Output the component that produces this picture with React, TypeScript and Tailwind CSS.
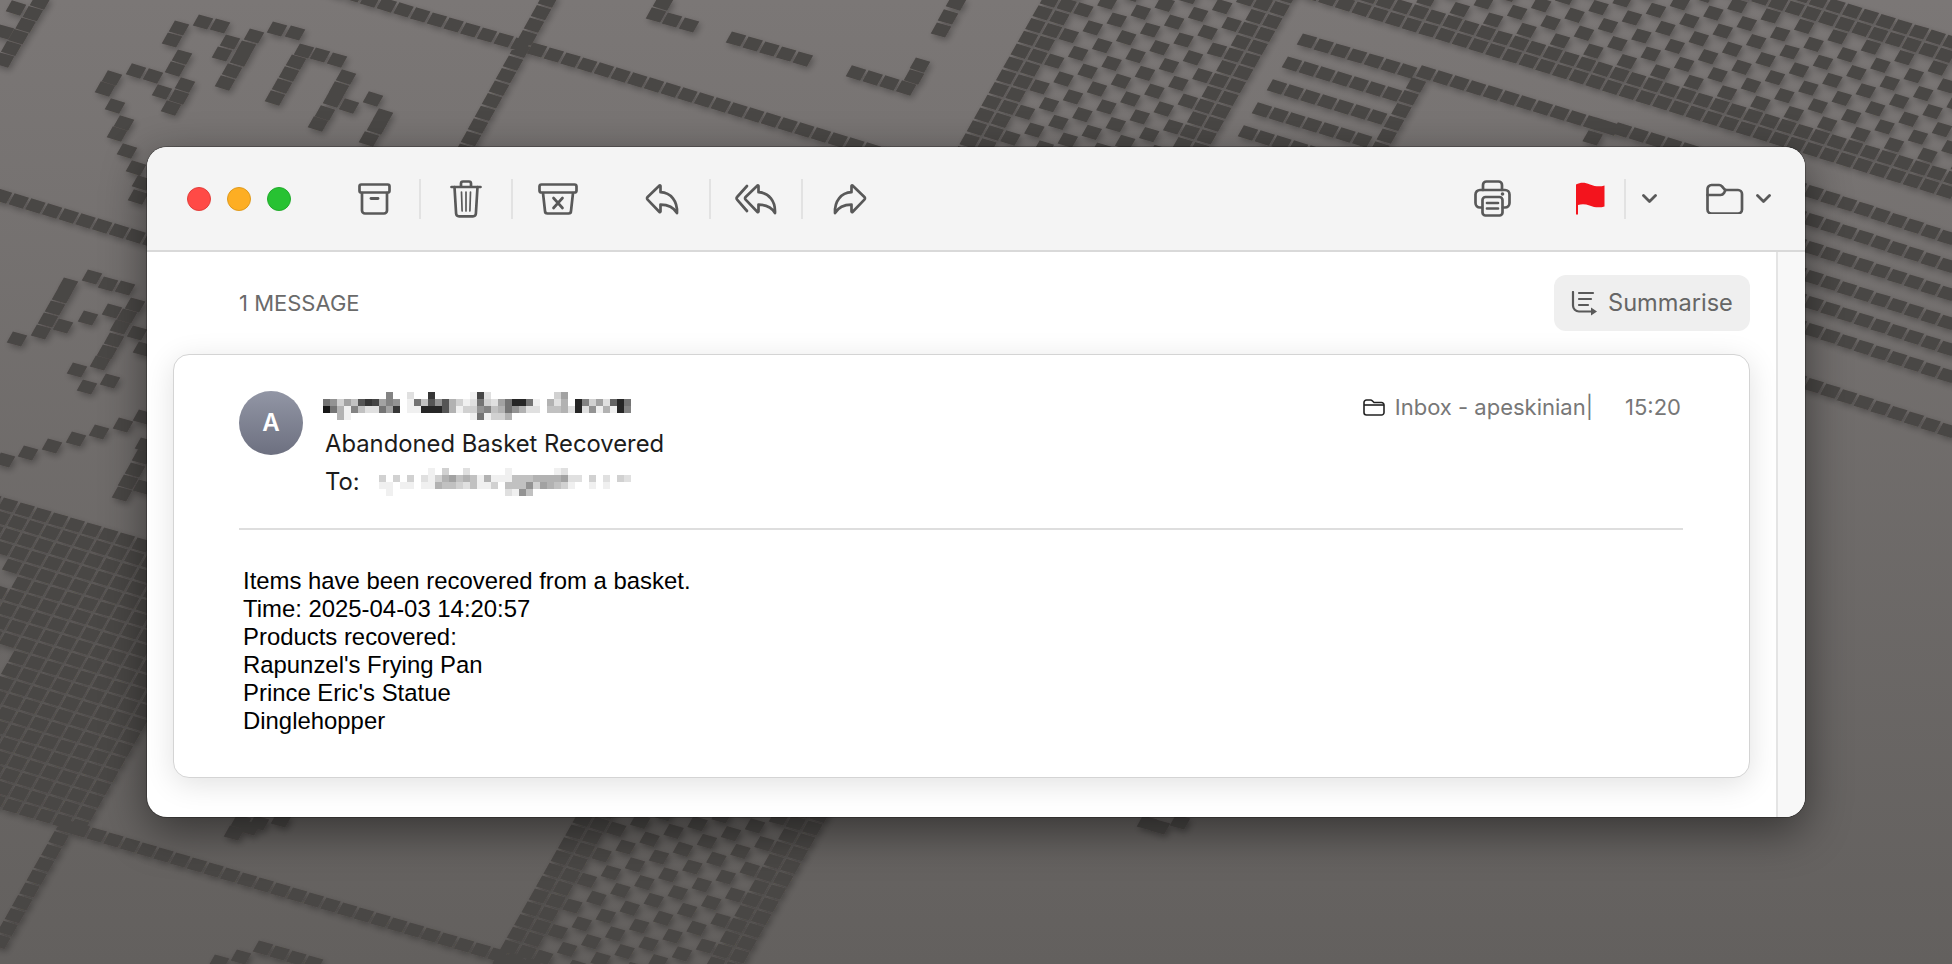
const U = [16.7, 5];
const UR = [16.7, 5.6];
const V = [-7.3, 12.8];

type Pt = [number, number];

function run(x: number, y: number, n: number, d: number[] = U): Pt[] {
  return Array.from({ length: n }, (_, k) => [x + d[0] * k, y + d[1] * k] as Pt);
}

// solid edges with a checker between them, used for the wide bands
function band(x: number, y: number, is: number[], js: number[], solid: (i: number, j: number) => boolean, d: number[]) {
  const out: Pt[] = [];
  for (let i = is[0]; i <= is[1]; i++) {
    for (let j = js[0]; j <= js[1]; j++) {
      if (!solid(i, j) && (i + j) % 2 !== 0) continue;
      const cx = x + d[0] * i + V[0] * j;
      const cy = y + d[1] * i + V[1] * j;
      if (cy < -20 || cy > 985 || cx < -20 || cx > 1975) continue;
      out.push([cx, cy]);
    }
  }
  return out;
}

function leftBlock() {
  const out: Pt[] = [];
  for (let i = -1; i <= 13; i++) {
    for (let j = 0; j <= 20; j++) {
      const cx = 8 + U[0] * i + V[0] * j;
      const cy = 505 + U[1] * i + V[1] * j;
      if (cx < -20) continue;
      if (cx < 8 && ((cy > 553 && cy < 582) || (cy > 648 && cy < 682))) continue;
      out.push([cx, cy]);
    }
  }
  return out;
}

const CELLS: Pt[] = [
  // top left glyphs
  [179, 28], [172, 40], [203, 22], [220, 26], [254, 36], [230, 42], [246, 48], [222, 54], [240, 59], [232, 71], [225, 83],
  [277, 29], [295, 33], [304, 51], [320, 55], [337, 60], [296, 62], [289, 74], [282, 86], [275, 98],
  [346, 77], [339, 89], [333, 100], [349, 106], [373, 99], [325, 113], [318, 124], [383, 116], [377, 127], [369, 139],
  [182, 57], [175, 69], [185, 85], [179, 97], [162, 92], [171, 108], [136, 71], [153, 76], [112, 78], [105, 89],
  [115, 106], [124, 123], [117, 134], [127, 151], [136, 168], [142, 183], [138, 197],
  [16, 8], [4, 32], [663, 3], [656, 15], [672, 20], [689, 25],
  ...run(40, 2, 6, [-7.2, 11.6]),
  // long line and its crossing column
  ...run(320, -15, 36),
  ...run(548, 0, 13, [-7, 12.6]),
  ...run(2, 196, 10),
  // left glyphs
  [68, 285], [62, 296], [55, 308], [48, 320], [41, 332], [63, 326], [92, 277], [108, 284], [125, 288], [135, 305],
  [112, 311], [127, 316], [120, 327], [137, 333], [114, 340], [107, 352], [100, 363], [88, 318], [77, 370], [87, 387],
  [110, 381], [143, 349], [17, 339], [123, 425], [99, 432], [76, 439], [52, 446], [28, 453], [5, 460], [143, 417],
  [122, 494], [128, 482], [135, 470], [142, 457], [145, 445], [143, 487],
  ...leftBlock(),
  ...run(80, 830, 30),
  ...run(66, 826, 10, V),
  // big vertical checker band
  ...band(1050, 0, [0, 12], [-15, 85], (i) => i < 2 || i > 10, U),
  // top right checker band
  ...band(1345, 4, [-4, 40], [-10, 0], (_, j) => j > -2 || j < -8, [16.7, 5.2]),
  // seven cell rows
  ...run(1307, 41, 7), ...run(1292, 64, 7), ...run(1277, 87, 7), ...run(1262, 110, 7), ...run(1248, 133, 7),
  // top small bits
  [956, 3], [948, 17], [941, 30], ...run(736, 39, 5), ...run(856, 73, 4), [920, 65], [914, 77],
  // L shaped line
  ...run(1426, 73, 12), ...run(1416, 85, 6, V), ...run(1600, 125, 2, V), ...run(1622, 130, 5),
  // right rows
  ...[187, 215, 243, 272, 298, 325, 380].flatMap((y) => run(1797, y, 11, UR)),
  // under the window
  [259, 823], [241, 822], [281, 820], [234, 833], [250, 828], [1147, 823], [1160, 827], [1180, 822],
  ...run(263, 948, 4), [241, 957], [219, 962],
];

function Wallpaper() {
  const d = CELLS.map(([x, y]) => {
    const ux = 7.2;
    const uy = 2.15;
    const vx = -3.1;
    const vy = 5.5;
    const p = [
      [x - ux - vx, y - uy - vy],
      [x + ux - vx, y + uy - vy],
      [x + ux + vx, y + uy + vy],
      [x - ux + vx, y - uy + vy],
    ];
    return `M${p.map((q) => q.map((n) => n.toFixed(1)).join(" ")).join("L")}Z`;
  }).join("");

  return (
    <svg className="absolute inset-0" width="1952" height="964">
      <defs>
        <filter id="cellShadow" x="-5%" y="-5%" width="110%" height="110%">
          <feDropShadow dx="2" dy="3" stdDeviation="3" floodColor="#000" floodOpacity="0.28" />
        </filter>
      </defs>
      <path d={d} fill="#4a4644" filter="url(#cellShadow)" />
    </svg>
  );
}

const SENDER = [
  "000000000800200d000001c2000000000360000000000",
  "97364bdc6870194b7b531293269ee9105250e8362ae9",
  "f951842296d011eeeb513378459752204452e27151e8",
  "00510000000000000000019133500000000000000000",
];

const RECIPIENT = [
  "00000000000000010300200000100000012000000000",
  "00000000303030213564541511144455556220302032",
  "00000000110110115443241130444736543100101000",
  "00000000010000000000000000217400000000000000",
];

function Mosaic({ rows, width }: { rows: string[]; width: number }) {
  return (
    <svg width={width} height="28" shapeRendering="crispEdges" className="block">
      {rows.map((row, r) =>
        row
          .slice(0, Math.ceil(width / 7))
          .split("")
          .map((c, i) => {
            const n = parseInt(c, 16);
            if (!n) return null;
            const g = Math.round(255 - n * 15.5);
            return <rect key={`${r}-${i}`} x={i * 7} y={r * 7} width="7" height="7" fill={`rgb(${g},${g},${g})`} />;
          }),
      )}
    </svg>
  );
}

const stroke = { fill: "none", stroke: "#595959", strokeWidth: 2.7, strokeLinecap: "round", strokeLinejoin: "round" } as const;

function Sep() {
  return <div className="w-[2px] h-[40px] bg-[#e2e2e2]" />;
}

function ArchiveIcon() {
  return (
    <svg width="33" height="32" viewBox="0 0 33 32" {...stroke}>
      <rect x="1.5" y="1.5" width="30" height="8" rx="1.8" />
      <path d="M4 10v17.5a3 3 0 0 0 3 3h19a3 3 0 0 0 3-3V10" />
      <path d="M13 15.5h7" strokeWidth="2.8" />
    </svg>
  );
}

function TrashIcon() {
  return (
    <svg width="32" height="38" viewBox="0 0 32 38" {...stroke}>
      <path d="M11 6.5V3.5a2 2 0 0 1 2-2h6a2 2 0 0 1 2 2v3" />
      <path d="M1.5 7h29" />
      <path d="M4.5 7l1.6 26.500a3 3 0 0 0 3 2.800h13.800a3 3 0 0 0 3-2.800L27.500 7" />
      <path d="M11.500 12l.6 19M16 12v19M20.500 12l-.6 19" strokeWidth="1.7" />
    </svg>
  );
}

function JunkIcon() {
  return (
    <svg width="40" height="32" viewBox="0 0 40 32" {...stroke}>
      <rect x="1.500" y="1.500" width="37" height="8" rx="2" />
      <path d="M5 10l2 18a2.500 2.500 0 0 0 2.500 2.500h21A2.500 2.500 0 0 0 33 28l2-18" />
      <path d="M15.500 15l9 10M24.500 15l-9 10" />
    </svg>
  );
}

const REPLY = "M14.500 2.500 2.600 14a1.800 1.800 0 0 0 0 2.600L14.500 29c.4.4 1 .1 1-.4v-7c7 0 12.500 1.500 16.500 8.400.6-12-6-20.200-16.500-20.800V3c0-.6-.6-.9-1-.5Z";

function ReplyIcon() {
  return (
    <svg width="35" height="32" viewBox="0 0 35 32" {...stroke}>
      <path d={REPLY} />
    </svg>
  );
}

function ReplyAllIcon() {
  return (
    <svg width="43" height="32" viewBox="0 0 43 32" {...stroke}>
      <path d="M12 3 2.100 14a1.800 1.800 0 0 0 0 2.600L12 28" />
      <g transform="translate(8 0)">
        <path d={REPLY} />
      </g>
    </svg>
  );
}

function ForwardIcon() {
  return (
    <svg width="35" height="32" viewBox="0 0 35 32" {...stroke}>
      <g transform="translate(35 0) scale(-1 1)">
        <path d={REPLY} />
      </g>
    </svg>
  );
}

function PrinterIcon() {
  return (
    <svg width="37" height="37" viewBox="0 0 37 37" {...stroke}>
      <path d="M9 10V5a3.500 3.500 0 0 1 3.500-3.500h12A3.500 3.500 0 0 1 28 5v5" />
      <path d="M8 27.500H6a4.500 4.500 0 0 1-4.500-4.500v-8.500A4.500 4.500 0 0 1 6 10h25a4.500 4.500 0 0 1 4.500 4.500V23a4.500 4.500 0 0 1-4.500 4.500h-2" />
      <rect x="8.500" y="17" width="20" height="18.500" rx="3" />
      <path d="M13 23h11M13 28.500h11" />
      <circle cx="28.500" cy="14" r="1.800" fill="#595959" stroke="none" />
    </svg>
  );
}

function FlagIcon() {
  return (
    <svg width="30" height="33" viewBox="0 0 30 33">
      <path
        d="M1 2.500C6 .0 10 .5 15 2.500c5 2 10 2.500 14.500 1v21c-5 1.500-10 1-15-1-4-1.500-8-1.500-11.500-.5V32.500H1Z"
        fill="#f3141d"
      />
    </svg>
  );
}

function FolderIcon({ className }: { className?: string }) {
  return (
    <svg width="38" height="31" viewBox="0 0 38 31" className={className} {...stroke}>
      <path d="M1.500 6a4 4 0 0 1 4-4h7.500a4 4 0 0 1 3 1.300l3 3.700h13a4 4 0 0 1 4 4v15.500a4 4 0 0 1-4 4h-26.500a4 4 0 0 1-4-4Z" />
      <path d="M1.500 12h13c1.500 0 2.500-.5 3.500-2l1.500-3" />
    </svg>
  );
}

function Chevron({ className }: { className?: string }) {
  return (
    <svg width="15" height="9" viewBox="0 0 15 9" className={className} {...stroke} strokeWidth="2.800">
      <path d="M1.500 1.500 7.500 7.500l6-6" />
    </svg>
  );
}

function SummariseIcon() {
  return (
    <svg width="27" height="25" viewBox="0 0 27 25" {...stroke} strokeWidth="2.200">
      <path d="M2 1v13.500a6 6 0 0 0 6 6h12" />
      <path d="M8 2h14M8 8h12M8 14h9" />
      <path d="M20 16.500l6 4-6 4Z" fill="#595959" stroke="none" />
    </svg>
  );
}

const BODY_LINES = [
  "Items have been recovered from a basket.",
  "Time: 2025-04-03 14:20:57",
  "Products recovered:",
  "Rapunzel's Frying Pan",
  "Prince Eric's Statue",
  "Dinglehopper",
];

export default function App() {
  return (
    <div className="relative w-[1952px] h-[964px] overflow-hidden pl-[147px] pt-[147px] bg-gradient-to-b from-[#7b7776] to-[#63605e] font-['Inter',sans-serif]">
      <Wallpaper />

      <div className="relative w-[1658px] h-[670px] flex flex-col rounded-[20px] overflow-hidden bg-white shadow-[0_0_0_1px_rgba(0,0,0,0.25),0_14px_45px_rgba(0,0,0,0.48)]">
        <div className="h-[105px] shrink-0 flex items-center pl-[40px] pr-[34px] bg-[#f4f4f4] border-b-2 border-[#d9d9d9]">
          <div className="flex items-center gap-[16px]">
            <span className="w-[24px] h-[24px] rounded-full bg-[#ff4a46] border border-[#e23f3b]" />
            <span className="w-[24px] h-[24px] rounded-full bg-[#fdae23] border border-[#df9a1d]" />
            <span className="w-[24px] h-[24px] rounded-full bg-[#27c232] border border-[#22ab2c]" />
          </div>
          <div className="ml-[67px] flex items-center">
            <ArchiveIcon />
            <div className="ml-[28px]"><Sep /></div>
            <div className="ml-[29px]"><TrashIcon /></div>
            <div className="ml-[29px]"><Sep /></div>
            <div className="ml-[25px]"><JunkIcon /></div>
            <div className="ml-[67px]"><ReplyIcon /></div>
            <div className="ml-[29px]"><Sep /></div>
            <div className="ml-[24px]"><ReplyAllIcon /></div>
            <div className="ml-[23px]"><Sep /></div>
            <div className="ml-[29px]"><ForwardIcon /></div>
          </div>
          <div className="ml-auto flex items-center">
            <PrinterIcon />
            <div className="ml-[64px]"><FlagIcon /></div>
            <div className="ml-[19px]"><Sep /></div>
            <Chevron className="ml-[16px]" />
            <FolderIcon className="ml-[49px]" />
            <Chevron className="ml-[12px]" />
          </div>
        </div>

        <div className="flex-1 flex min-h-0">
          <div className="w-[1629px] flex flex-col">
            <div className="h-[56px] mt-[23px] flex items-center justify-between pl-[92px] pr-[26px]">
              <span className="text-[22px] text-[#6a6a6a]">1 MESSAGE</span>
              <button className="h-[56px] w-[196px] rounded-[12px] bg-[#efefef] flex items-center pl-[17px] gap-[10px] text-[23.6px] text-[#666666]">
                <SummariseIcon />
                Summarise
              </button>
            </div>

            <div className="ml-[26px] mt-[23px] w-[1577px] h-[424px] rounded-[16px] bg-white border border-[#d4d4d4] shadow-[0_6px_30px_rgba(0,0,0,0.12)] pl-[65px] pr-[66px] pt-[36px]">
              <div className="flex items-start">
                <div className="w-[64px] h-[64px] rounded-full bg-gradient-to-b from-[#9296a5] to-[#6d7080] flex items-center justify-center text-white text-[24px] font-semibold">
                  A
                </div>
                <div className="ml-[20px] pt-[1px]">
                  <Mosaic rows={SENDER} width={308} />
                  <div className="ml-[2px] mt-[10px] text-[23.8px] leading-[28px] text-[#1c1c1c]">Abandoned Basket Recovered</div>
                  <div className="mt-[10px] flex">
                    <span className="ml-[2px] w-[47px] text-[23.8px] leading-[28px] text-[#1c1c1c]">To:</span>
                    <Mosaic rows={RECIPIENT.map((r) => r.slice(7))} width={259} />
                  </div>
                </div>
                <div className="ml-auto mt-[2px] flex items-center text-[22px] leading-[28px] text-[#777777]">
                  <svg width="22" height="17" viewBox="0 0 22 17" fill="none" stroke="#222222" strokeWidth="1.600" strokeLinejoin="round">
                    <path d="M1 3.500a2.500 2.500 0 0 1 2.500-2.500h4c1 0 1.500.5 2 1l1.500 1.500h7.500a2.500 2.500 0 0 1 2.500 2.500v7.500a2.500 2.500 0 0 1-2.500 2.500h-15a2.500 2.500 0 0 1-2.500-2.500Z" />
                    <path d="M1 6h20" />
                  </svg>
                  <span className="ml-[10px]">Inbox - apeskinian|</span>
                  <span className="ml-[32px] mr-[2px]">15:20</span>
                </div>
              </div>

              <div className="mt-[32px] h-[2px] bg-[#dedede]" />

              <div className="mt-[37px] ml-[4px] font-['Liberation_Sans',sans-serif] text-[23.9px] leading-[28px] text-black">
                {BODY_LINES.map((line) => (
                  <div key={line}>{line}</div>
                ))}
              </div>
            </div>
          </div>
          <div className="flex-1 bg-[#f8f8f8] border-l-2 border-[#e4e4e4]" />
        </div>
      </div>
    </div>
  );
}
